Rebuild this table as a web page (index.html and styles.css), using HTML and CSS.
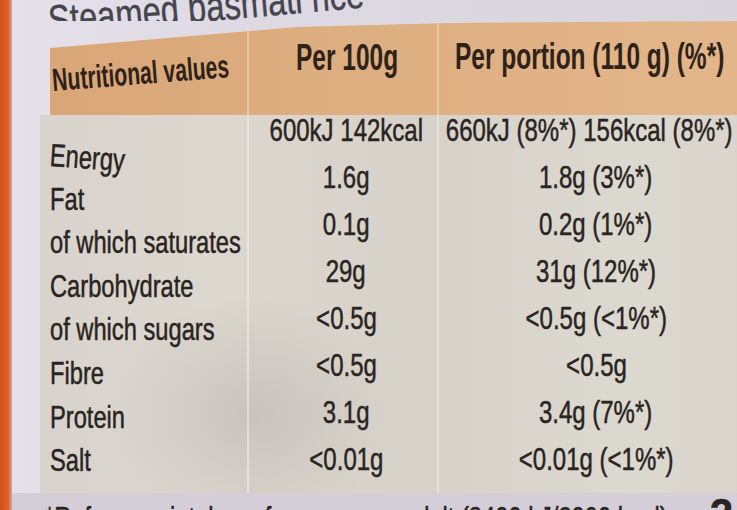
FILE: index.html
```html
<!DOCTYPE html>
<html lang="en">
<head>
<meta charset="utf-8">
<title>Nutritional values</title>
<link rel="stylesheet" href="styles.css">
</head>
<body>
<div class="page">
  <div class="strip"></div>
  <div class="sheet">
    <div class="title"><span class="t">Steamed basmati rice</span></div>
    <div class="table">
      <div class="head">
        <div class="hcell hlabel"><span class="t">Nutritional values</span></div>
        <div class="hcell h100"><span class="t">Per 100g</span></div>
        <div class="hcell hportion"><span class="t">Per portion (110 g) (%*)</span></div>
      </div>
      <div class="rows">
        <div class="col labels">
          <div class="cell energy"><span class="t">Energy</span></div>
          <div class="cell"><span class="t">Fat</span></div>
          <div class="cell"><span class="t">of which saturates</span></div>
          <div class="cell"><span class="t">Carbohydrate</span></div>
          <div class="cell"><span class="t">of which sugars</span></div>
          <div class="cell"><span class="t">Fibre</span></div>
          <div class="cell"><span class="t">Protein</span></div>
          <div class="cell"><span class="t">Salt</span></div>
        </div>
        <div class="col per100">
          <div class="cell"><span class="t">600kJ 142kcal</span></div>
          <div class="cell"><span class="t">1.6g</span></div>
          <div class="cell"><span class="t">0.1g</span></div>
          <div class="cell"><span class="t">29g</span></div>
          <div class="cell"><span class="t">&lt;0.5g</span></div>
          <div class="cell"><span class="t">&lt;0.5g</span></div>
          <div class="cell"><span class="t">3.1g</span></div>
          <div class="cell"><span class="t">&lt;0.01g</span></div>
        </div>
        <div class="col portion">
          <div class="cell first"><span class="t">660kJ (8%*) 156kcal (8%*)</span></div>
          <div class="cell"><span class="t">1.8g (3%*)</span></div>
          <div class="cell"><span class="t">0.2g (1%*)</span></div>
          <div class="cell"><span class="t">31g (12%*)</span></div>
          <div class="cell"><span class="t">&lt;0.5g (&lt;1%*)</span></div>
          <div class="cell"><span class="t">&lt;0.5g</span></div>
          <div class="cell"><span class="t">3.4g (7%*)</span></div>
          <div class="cell"><span class="t">&lt;0.01g (&lt;1%*)</span></div>
        </div>
      </div>
    </div>
    <div class="foot">
      <span class="note t">*Reference intakes of an average adult (8400 kJ/2000 kcal)</span>
      <span class="mark">2</span>
    </div>
  </div>
</div>
</body>
</html>
```

FILE: styles.css
```css
html, body {
  margin: 0;
  padding: 0;
  width: 737px;
  height: 510px;
  overflow: hidden;
  background: #dedae4;
}

.page {
  display: flex;
  width: 737px;
  height: 510px;
  overflow: hidden;
  font-family: "Liberation Sans", Arial, sans-serif;
  color: #2a2420;
}

.t {
  display: inline-block;
  white-space: nowrap;
}

.strip {
  flex: 0 0 12px;
  background: linear-gradient(to right, #d4501a, #e0642a 70%, #e6a189);
}

.sheet {
  flex: 1;
  display: flex;
  flex-direction: column;
  min-width: 0;
  background: linear-gradient(to right, #e4e1ea, #dedae4 30%, #d9d5df);
}

/* cut-off product name at the top */
.title {
  height: 21px;
  padding-left: 38px;
  overflow: hidden;
  font-size: 42px;
  line-height: 42px;
  color: #46444d;
  -webkit-text-stroke: 0.4px #46444d;
}

.title .t {
  margin-top: -20px;
  transform: rotate(-5deg) scaleX(0.78);
  transform-origin: left bottom;
}

.table {
  display: flex;
  flex-direction: column;
  margin-left: 28px;
}

/* orange header band */
.head {
  display: grid;
  grid-template-columns: 197px 190px 1fr;
  height: 94px;
  margin-left: 10px;
  background: linear-gradient(to right, #d9a677, #ddae80 40%, #e3b68a);
  clip-path: polygon(0 27px, 12% 20px, 36% 6px, 58% 2px, 100% 0, 100% 100%, 0 100%);
  font-weight: bold;
  color: #2e2219;
}

.hcell {
  display: flex;
  border-left: 2px solid rgba(238, 206, 166, 0.8);
}

.hlabel {
  border-left: none;
  padding-top: 43px;
  padding-left: 3px;
  font-size: 32px;
  line-height: 32px;
}

.hlabel .t {
  transform: rotate(-4.5deg) scaleX(0.66);
  transform-origin: left center;
}

.h100 {
  justify-content: center;
  padding-top: 19px;
  padding-left: 8px;
  font-size: 36px;
  line-height: 36px;
}

.h100 .t {
  transform: scaleX(0.68);
  transform-origin: center;
}

.hportion {
  padding-top: 18px;
  padding-left: 16px;
  font-size: 36px;
  line-height: 36px;
}

.hportion .t {
  transform: scaleX(0.68);
  transform-origin: left center;
}

/* table body */
.rows {
  display: grid;
  grid-template-columns: 207px 190px 1fr;
  height: 378px;
  background:
    radial-gradient(ellipse 140px 120px at 210px 300px, rgba(150, 145, 140, 0.28), rgba(150, 145, 140, 0) 100%),
    linear-gradient(to right, #d8d4cd, #dcd8d0 25%, #d6d2ca 55%, #dcd9d1 85%, #d9d5cd);
  font-size: 32px;
  -webkit-text-stroke: 0.5px #2a2420;
}

.col {
  display: flex;
  flex-direction: column;
  min-width: 0;
}

.labels {
  padding-top: 19px;
  padding-left: 10px;
  line-height: 43.6px;
}

.labels .t {
  transform: scaleX(0.74);
  transform-origin: left center;
}

.labels .energy .t {
  transform: rotate(4deg) scaleX(0.74);
}

.per100,
.portion {
  margin-top: -8px;
  line-height: 47px;
  align-items: center;
  border-left: 2px solid rgba(236, 233, 226, 0.7);
}

.per100 {
  padding-left: 6px;
}

.portion {
  padding-left: 16px;
}

.per100 .t,
.portion .t {
  transform: scaleX(0.75);
  transform-origin: center;
}

.portion .first {
  margin-right: 14px;
}

/* footnote, cut at the bottom */
.foot {
  flex: 1;
  display: flex;
  justify-content: space-between;
  align-items: flex-start;
  padding-top: 9px;
  padding-left: 33px;
  overflow: hidden;
  background: #d3ced7;
  font-size: 32px;
  line-height: 32px;
  -webkit-text-stroke: 0.5px #2a2420;
}

.note {
  flex: 0 0 640px;
  width: 640px;
  min-width: 0;
  transform: scaleX(0.74);
  transform-origin: left top;
}

.mark {
  flex: none;
  margin-top: -9px;
  margin-right: 4px;
  font-weight: bold;
  font-size: 42px;
  line-height: 42px;
}
```
